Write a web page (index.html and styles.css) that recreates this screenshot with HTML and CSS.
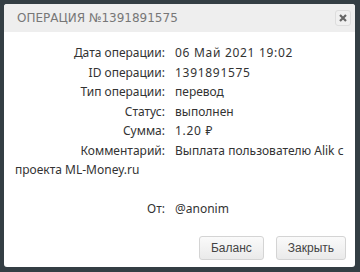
FILE: index.html
```html
<!DOCTYPE html>
<html>
<head>
<meta charset="utf-8">
<link rel="stylesheet" href="styles.css">
</head>
<body>
<div class="dialog">
  <div class="header">
    <span class="title">ОПЕРАЦИЯ №1391891575</span>
    <button class="close" aria-label="close">
      <svg width="8" height="8" viewBox="0 0 8 8"><path d="M1 1L7 7M7 1L1 7" stroke="#666" stroke-width="2.2"/></svg>
    </button>
  </div>
  <div class="content">
    <div class="row"><span class="label">Дата операции:</span><span class="value num">06 Май 2021 19:02</span></div>
    <div class="row"><span class="label">ID операции:</span><span class="value num">1391891575</span></div>
    <div class="row"><span class="label">Тип операции:</span><span class="value">перевод</span></div>
    <div class="row"><span class="label">Статус:</span><span class="value">выполнен</span></div>
    <div class="row"><span class="label">Сумма:</span><span class="value num">1.20 ₽</span></div>
    <div class="row"><span class="label">Комментарий:</span>Выплата пользователю Alik с проекта ML-Money.ru</div>
    <div class="row spacer"></div>
    <div class="row"><span class="label">От:</span><span class="value">@anonim</span></div>
  </div>
  <div class="footer">
    <button class="btn">Баланс</button>
    <button class="btn">Закрыть</button>
  </div>
</div>
</body>
</html>
```

FILE: styles.css
```css
html, body {
  margin: 0;
  padding: 0;
  background: #343e44;
  width: 360px;
  height: 272px;
  overflow: hidden;
}
body {
  padding: 4px 4px 0 4px;
  box-sizing: border-box;
}
.dialog {
  width: 351px;
  height: 263px;
  background: #fff;
  border-radius: 3px;
  display: flex;
  flex-direction: column;
  font-family: "Noto Sans", sans-serif;
  color: #333;
}
.header {
  height: 28px;
  background: #eeeeee;
  border-radius: 3px 3px 0 0;
  display: flex;
  align-items: center;
  justify-content: space-between;
  padding: 0 4px 0 13px;
}
.title {
  font-family: "DejaVu Sans", sans-serif;
  font-size: 12px;
  color: #777;
}
.close {
  width: 16px;
  height: 16px;
  padding: 0;
  border: 1px solid #ddd;
  border-radius: 3px;
  background: #f0f0f0;
  display: flex;
  align-items: center;
  justify-content: center;
}
.content {
  padding: 11px 4px 0 11px;
  font-size: 12px;
  line-height: 19.5px;
  flex: 1;
}
.row {
  min-height: 19.5px;
}
.label {
  display: inline-block;
  width: 150px;
  text-align: right;
  margin-right: 10px;
}
.num {
  letter-spacing: 0.7px;
}
.footer {
  display: flex;
  justify-content: flex-end;
  gap: 12px;
  padding: 0 9px 7px 0;
}
.btn {
  height: 24px;
  padding: 0 11px;
  font-family: "Liberation Sans", sans-serif;
  font-size: 12px;
  color: #444;
  background: linear-gradient(#fafafa, #eaeaea);
  border: 1px solid #d4d4d4;
  border-radius: 3px;
}
```
